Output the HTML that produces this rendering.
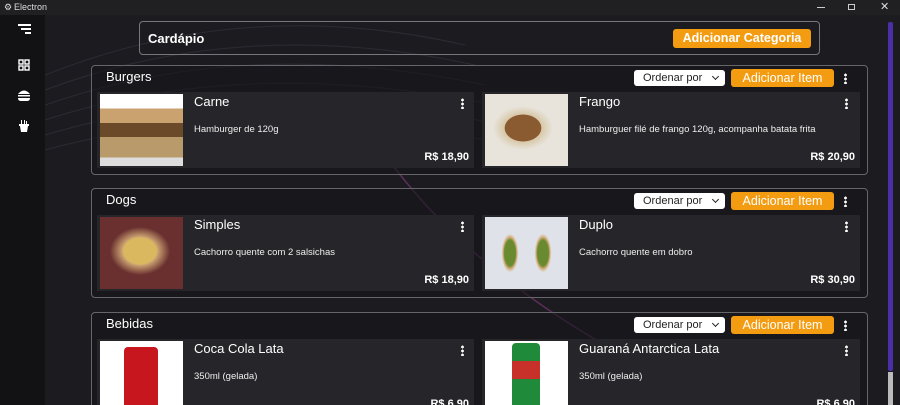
<!DOCTYPE html>
<html style="width:900px;height:405px;overflow:hidden"><head><meta charset="utf-8"><style>
*{margin:0;padding:0;box-sizing:border-box}
body{width:900px;height:405px;overflow:hidden;background:#1c1c20;font-family:"Liberation Sans",sans-serif;color:#fff;position:relative}
.tb{position:absolute;left:0;top:0;width:900px;height:15px;background:#202022;font-size:9px;color:#ddd}
.side{position:absolute;left:0;top:15px;width:45px;height:390px;background:#121214}
.abs{position:absolute}
.box{position:absolute;left:91px;width:777px;border:1px solid #66666a;border-radius:4px;background:rgba(22,22,26,.6)}
.cat{position:absolute;left:14px;top:3px;font-size:13px}
.sel{position:absolute;left:542px;top:4px;width:91px;height:16px;background:#fff;border-radius:3px;color:#222;font-size:11px;padding-left:9px;line-height:16px}
.sel:after{content:"";position:absolute;right:7px;top:4px;width:4px;height:4px;border-right:1.5px solid #222;border-bottom:1.5px solid #222;transform:rotate(45deg)}
.btn{position:absolute;left:639px;top:3px;width:103px;height:18px;background:#f39c12;border-radius:3px;font-size:12.5px;line-height:18px;text-align:center;color:#fff}
.kb{position:absolute;width:3px;height:11px;background:radial-gradient(circle,#fff 1.3px,transparent 1.5px) 0 0/3px 4px repeat-y}
.card{position:absolute;top:26px;height:76px;background:#26262a}
.img{position:absolute;left:3px;top:2px;width:83px;height:72px;background:#fff;overflow:hidden}
.nm{position:absolute;left:97px;top:2px;font-size:13px}
.ds{position:absolute;left:97px;top:32px;font-size:9.5px;color:#eee}
.pr{position:absolute;right:5px;top:59px;font-size:11px;font-weight:bold}
</style></head><body>
<svg class="abs" style="left:45px;top:15px" width="855" height="390"><g fill="none" stroke="#2b2b34" stroke-width="1">
<path d="M0 60 Q200 -20 420 30"/><path d="M0 75 Q200 0 430 50"/><path d="M0 90 Q200 20 440 70"/><path d="M0 105 Q200 40 450 90"/><path d="M0 120 Q200 60 460 110"/><path d="M0 135 Q200 80 470 130"/></g>
<path d="M340 140 Q420 250 560 330" stroke="#5a2f5a" fill="none" stroke-width="1.5"/></svg>
<div class="tb"><span style="position:absolute;left:4px;top:2px">⚙</span><span style="position:absolute;left:14px;top:2px">Electron</span>
<div class="abs" style="left:817px;top:7px;width:8px;height:1px;background:#ccc"></div>
<div class="abs" style="left:848px;top:4px;width:7px;height:6px;border:1px solid #ccc"></div>
<span style="position:absolute;left:880px;top:0px;font-size:11px">✕</span></div>
<div class="side">
<div class="abs" style="left:18px;top:9px;width:13px;height:2px;background:#fff"></div>
<div class="abs" style="left:21px;top:13px;width:10px;height:2px;background:#fff"></div>
<div class="abs" style="left:25px;top:17px;width:6px;height:2px;background:#fff"></div>
<svg class="abs" style="left:18px;top:44px" width="12" height="12" fill="none" stroke="#fff" stroke-width="1.4"><rect x="1" y="1" width="4" height="4"/><rect x="7" y="1" width="4" height="4"/><rect x="1" y="7" width="4" height="4"/><rect x="7" y="7" width="4" height="4"/></svg>
<svg class="abs" style="left:17px;top:74px" width="14" height="12" fill="#fff"><path d="M1 5 Q7 -2 13 5Z"/><rect x="1" y="6" width="12" height="1.5"/><path d="M1 9 H13 Q13 12 10 12 H4 Q1 12 1 9Z"/></svg>
<svg class="abs" style="left:18px;top:105px" width="12" height="13" fill="#fff"><rect x="1" y="4" width="10" height="2"/><path d="M2 6 H10 L9 12 H3Z"/><rect x="3" y="0" width="1" height="4"/><rect x="6" y="0" width="1" height="4"/><rect x="8" y="1" width="1" height="3"/></svg>
</div>
<div class="abs" style="left:888px;top:22px;width:5px;height:349px;background:#4b2fa6;border-radius:2px"></div>
<div class="abs" style="left:888px;top:372px;width:5px;height:33px;background:#bbb"></div>
<div class="abs" style="left:139px;top:21px;width:681px;height:34px;border:1px solid #77777c;border-radius:4px">
<div class="abs" style="left:8px;top:9px;font-size:13px;font-weight:bold">Cardápio</div>
<div class="abs" style="left:533px;top:7px;width:138px;height:19px;background:#f39c12;border-radius:3px;font-size:12.5px;font-weight:bold;text-align:center;line-height:19px">Adicionar Categoria</div></div>

<div class="box" style="top:65px;height:110px"><div class="cat">Burgers</div><div class="sel">Ordenar por</div><div class="btn">Adicionar Item</div><div class="kb" style="left:752px;top:7px"></div>
<div class="card" style="left:5px;width:377px"><div class="img" style="background:linear-gradient(#fff 0 20%,#c9a270 20% 40%,#6b4a2a 40% 60%,#b99a6a 60% 88%,#ddd 88%)"></div><div class="nm">Carne</div><div class="ds">Hamburger de 120g</div><div class="pr">R$ 18,90</div><div class="kb" style="left:364px;top:6px"></div></div>
<div class="card" style="left:390px;width:378px"><div class="img" style="background:radial-gradient(ellipse 30px 22px at 38px 34px,#8a5a30 0 60%,#d8c8a8 62%,#e8e4dc 100%)"></div><div class="nm">Frango</div><div class="ds">Hamburguer filé de frango 120g, acompanha batata frita</div><div class="pr">R$ 20,90</div><div class="kb" style="left:363px;top:6px"></div></div></div>

<div class="box" style="top:188px;height:110px"><div class="cat">Dogs</div><div class="sel">Ordenar por</div><div class="btn">Adicionar Item</div><div class="kb" style="left:752px;top:7px"></div>
<div class="card" style="left:5px;width:377px"><div class="img" style="background:radial-gradient(ellipse 30px 24px at 40px 34px,#d9b860 0 55%,#c9a070 60%,#6a3030 100%)"></div><div class="nm">Simples</div><div class="ds">Cachorro quente com 2 salsichas</div><div class="pr">R$ 18,90</div><div class="kb" style="left:364px;top:6px"></div></div>
<div class="card" style="left:390px;width:378px"><div class="img" style="background:radial-gradient(ellipse 14px 32px at 25px 36px,#6a8a30 0 40%,#d8b080 50%,transparent 60%),radial-gradient(ellipse 14px 32px at 58px 36px,#6a8a30 0 40%,#d8b080 50%,transparent 60%),#dfe2e8"></div><div class="nm">Duplo</div><div class="ds">Cachorro quente em dobro</div><div class="pr">R$ 30,90</div><div class="kb" style="left:363px;top:6px"></div></div></div>

<div class="box" style="top:312px;height:110px"><div class="cat">Bebidas</div><div class="sel">Ordenar por</div><div class="btn">Adicionar Item</div><div class="kb" style="left:752px;top:7px"></div>
<div class="card" style="left:5px;width:377px"><div class="img"><div class="abs" style="left:24px;top:6px;width:34px;height:70px;background:#c8161e;border-radius:4px"></div></div><div class="nm">Coca Cola Lata</div><div class="ds">350ml (gelada)</div><div class="pr">R$ 6,90</div><div class="kb" style="left:364px;top:6px"></div></div>
<div class="card" style="left:390px;width:378px"><div class="img"><div class="abs" style="left:27px;top:2px;width:28px;height:72px;background:#1f8a3a;border-radius:4px"><div class="abs" style="left:0;top:18px;width:28px;height:18px;background:#c8302a"></div></div></div><div class="nm">Guaraná Antarctica Lata</div><div class="ds">350ml (gelada)</div><div class="pr">R$ 6,90</div><div class="kb" style="left:363px;top:6px"></div></div></div>
</body></html>
